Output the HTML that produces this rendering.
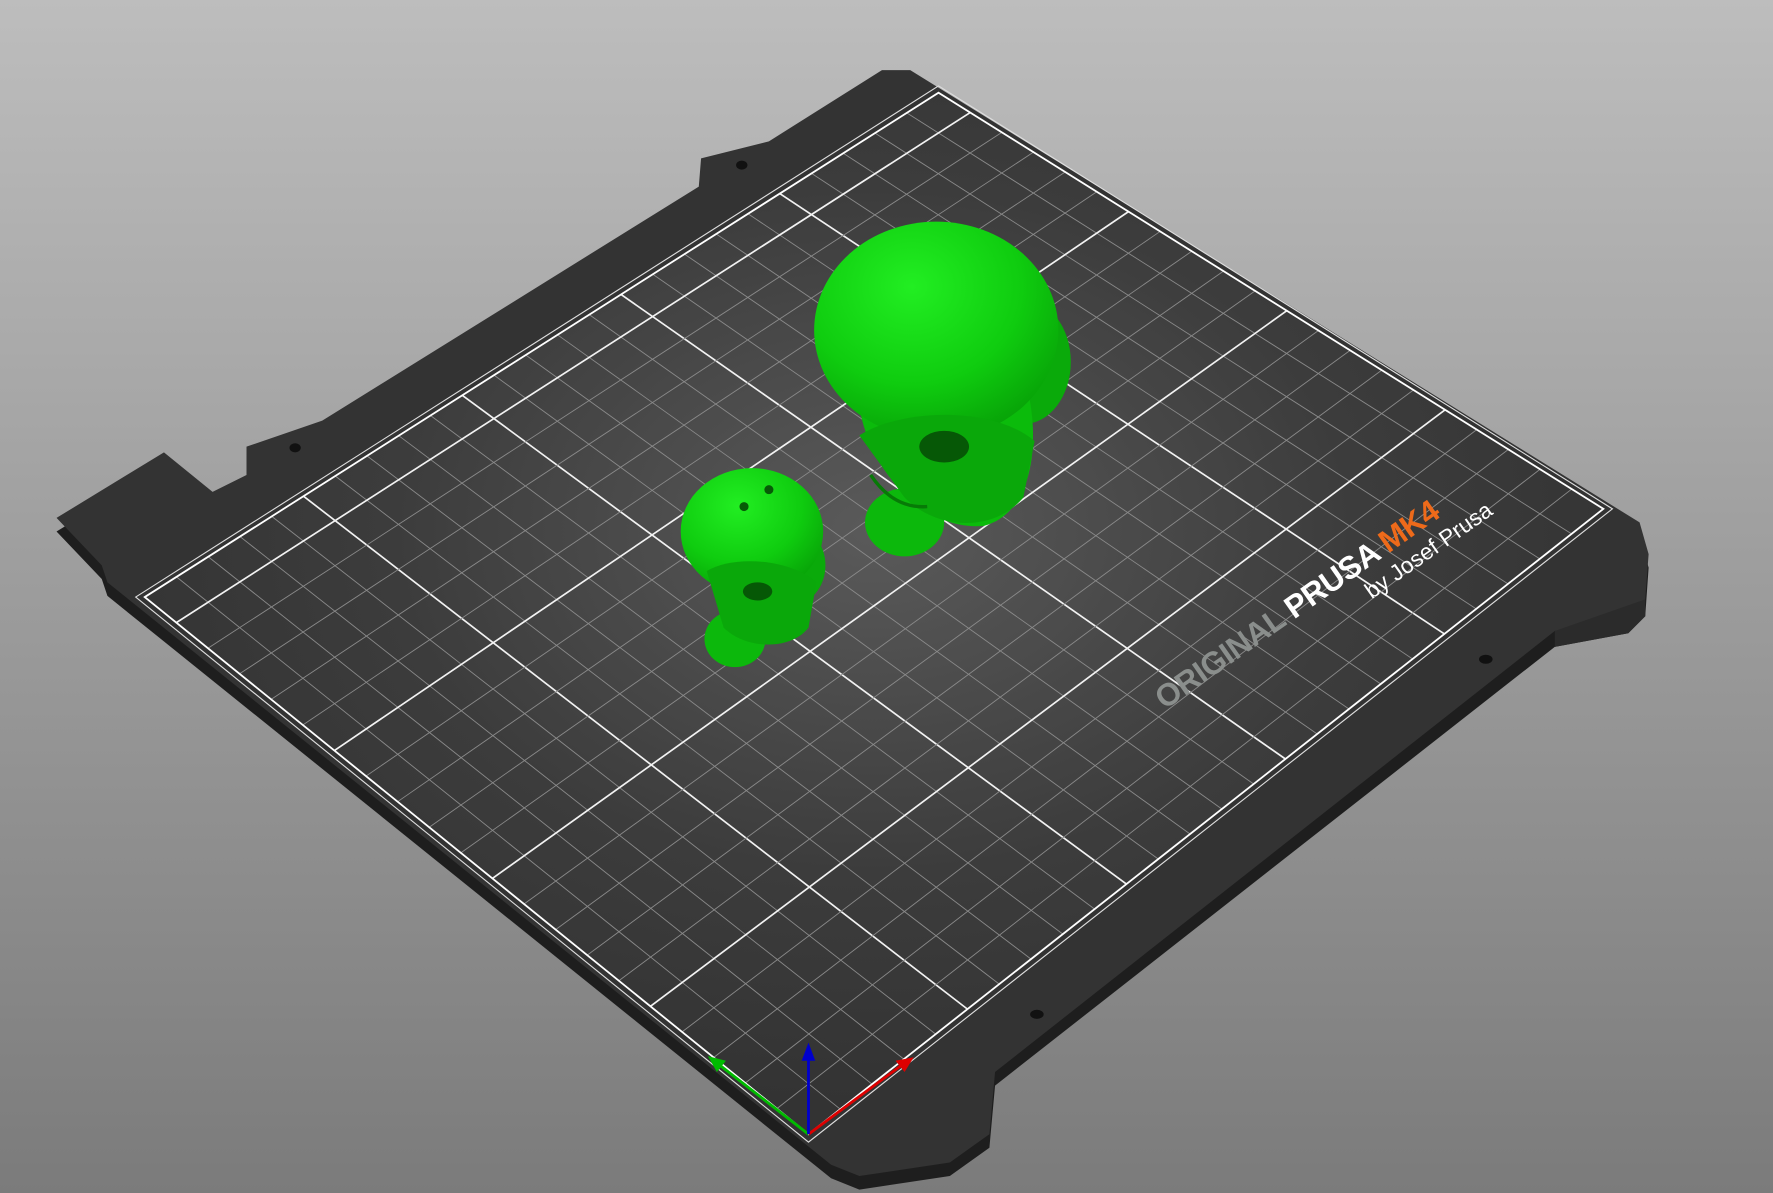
<!DOCTYPE html>
<html><head><meta charset="utf-8"><style>
html,body{margin:0;padding:0;width:1773px;height:1193px;overflow:hidden;background:#999}
svg{display:block}
</style></head><body>
<svg id="s" width="1773" height="1193" viewBox="0 0 1568 1055" preserveAspectRatio="none" xmlns="http://www.w3.org/2000/svg">
<defs>
<linearGradient id="bg" x1="0" y1="0" x2="0" y2="1"><stop offset="0" stop-color="#bdbdbd"/><stop offset="1" stop-color="#7b7b7b"/></linearGradient>
<radialGradient id="plate" cx="0.5" cy="0.42" r="0.55"><stop offset="0" stop-color="#5a5a5a"/><stop offset="0.6" stop-color="#3c3c3c"/><stop offset="1" stop-color="#333"/></radialGradient>
<radialGradient id="g1" cx="0.4" cy="0.3" r="0.75"><stop offset="0" stop-color="#22ee22"/><stop offset="0.6" stop-color="#0fcc0f"/><stop offset="1" stop-color="#07a007"/></radialGradient>
</defs>
<rect width="1568" height="1055" fill="url(#bg)"/>
<!-- plate side -->
<polygon fill="#1e1e1e" points="50,470 145,412 188,447 218,432 218,407 285,384 618,177 620,152 680,137 780,74 805,74 1450,474 1458,502 1455,545 1440,560 1375,572 880,960 875,1015 840,1040 760,1052 735,1042 95,527 90,512"/>
<polygon fill="#333" points="50,458 145,400 188,435 218,420 218,395 285,372 618,165 620,140 680,125 780,62 805,62 1450,462 1458,490 1455,530 1440,545 1375,558 880,948 875,1003 840,1028 760,1040 735,1030 95,515 90,500"/>
<polygon fill="#2b2b2b" points="1375,558 1455,530 1455,545 1440,560 1375,572"/>
<ellipse cx="656" cy="146" rx="5" ry="4" fill="#111"/>
<ellipse cx="261" cy="396" rx="5" ry="4" fill="#111"/>
<ellipse cx="1314" cy="583" rx="6" ry="4" fill="#111"/>
<ellipse cx="917" cy="897" rx="6" ry="4" fill="#111"/>
<polygon fill="url(#plate)" points="128,528 830,82 1418,450 715,1003"/>
<g id="grid"></g>
<polygon fill="none" stroke="#fff" stroke-width="1.6" points="128,528 830,82 1418,450 715,1003"/>
<polygon fill="none" stroke="#ddd" stroke-width="1" points="120,528 830,76 1426,450 715,1010"/>
<text transform="translate(1030,628) rotate(-35)" font-family="Liberation Sans,sans-serif" font-size="28" font-weight="bold" letter-spacing="-0.5"><tspan fill="#8a8e8c">ORIGINAL </tspan><tspan fill="#fff">PRUSA </tspan><tspan fill="#ee6a1a">MK4</tspan></text>
<text transform="translate(1213,530) rotate(-35)" font-family="Liberation Sans,sans-serif" font-size="20" fill="#fff">by Josef Prusa</text>
<!-- big skull -->
<g>
<ellipse cx="800" cy="462" rx="35" ry="30" fill="#0cb80c"/>
<ellipse cx="905" cy="320" rx="42" ry="55" fill="#0aaa0a"/>
<path d="M760,360 C770,420 820,470 870,465 C910,455 920,400 910,350 Z" fill="#0bbb0b"/>
<ellipse cx="828" cy="292" rx="108" ry="96" fill="url(#g1)"/>
<path d="M760,385 C800,360 880,360 915,390 L905,440 C880,470 830,470 800,440 Z" fill="#0aa80a"/>
<ellipse cx="835" cy="395" rx="22" ry="14" fill="#065806"/>
<path d="M770,420 q20,30 50,28" stroke="#077a07" stroke-width="3" fill="none"/>
</g>
<!-- small skull -->
<g>
<ellipse cx="650" cy="565" rx="27" ry="25" fill="#0cb80c"/>
<ellipse cx="700" cy="500" rx="30" ry="35" fill="#0aaa0a"/>
<ellipse cx="665" cy="470" rx="63" ry="56" fill="url(#g1)"/>
<path d="M625,505 C650,490 700,495 722,515 L715,555 C700,575 660,575 640,555 Z" fill="#0aa80a"/>
<ellipse cx="670" cy="523" rx="13" ry="8" fill="#065806"/>
<circle cx="658" cy="448" r="4" fill="#075a07"/><circle cx="680" cy="433" r="4" fill="#075a07"/>
</g>
<!-- axes -->
<line x1="715" y1="1003" x2="800" y2="940" stroke="#d00" stroke-width="2.5"/>
<polygon points="808,935 792,938 800,948" fill="#d00"/>
<line x1="715" y1="1003" x2="634" y2="940" stroke="#0b0" stroke-width="2.5"/>
<polygon points="626,934 642,938 634,948" fill="#0b0"/>
<line x1="715" y1="1003" x2="715" y2="935" stroke="#00c" stroke-width="2.5"/>
<polygon points="715,922 709,938 721,938" fill="#00c"/>
</svg>
<script>
var B=[715,1003],R=[1418,450],T=[830,82],L=[128,528];
function P(u,v){var x=(1-u)*(1-v)*B[0]+u*(1-v)*R[0]+u*v*T[0]+(1-u)*v*L[0];var y=(1-u)*(1-v)*B[1]+u*(1-v)*R[1]+u*v*T[1]+(1-u)*v*L[1];return [x,y];}
var g=document.getElementById('grid'),h='';
function ln(a,b,maj){h+='<line x1="'+a[0]+'" y1="'+a[1]+'" x2="'+b[0]+'" y2="'+b[1]+'" stroke="'+(maj?'#f2f2f2':'#8a8a8a')+'" stroke-width="'+(maj?1.5:0.8)+'"/>';}
for(var i=1;i<25;i++){var u=i/25;ln(P(u,0),P(u,1),i%5==0);}
for(var j=1;j<21;j++){var v=j/21;ln(P(0,v),P(1,v),j%5==0);}
g.innerHTML=h;
</script>
</body></html>
